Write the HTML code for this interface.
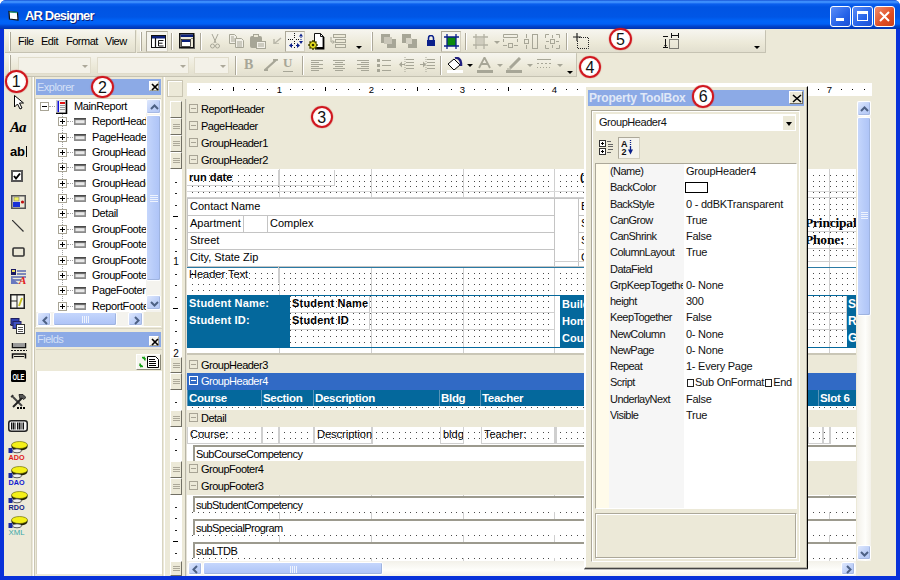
<!DOCTYPE html>
<html><head><meta charset="utf-8">
<style>
*{margin:0;padding:0;box-sizing:border-box}
html,body{width:900px;height:580px;overflow:hidden;background:#fff}
body{font-family:"Liberation Sans",sans-serif;font-size:11px;color:#000;position:relative}
.a{position:absolute}
#win{position:absolute;left:0;top:0;width:900px;height:580px;background:#0831d9;border-radius:6px 6px 0 0;overflow:hidden}
#title{position:absolute;left:0;top:0;width:900px;height:29px;background:linear-gradient(#0a3fc8 0px,#3d8ffc 1px,#3a8bfb 2.5px,#0b60ee 4px,#0054e3 7px,#0056e6 17px,#0064f8 21px,#0060f5 24px,#0046d0 26px,#0034b0 29px)}
#ttext{position:absolute;left:25px;top:8px;color:#fff;font-weight:bold;font-size:13px;line-height:16px;letter-spacing:-0.85px;text-shadow:1px 1px 0 #0a1e7a}
.tb{position:absolute;top:6px;width:21px;height:21px;border:1px solid #fff;border-radius:3px;background:linear-gradient(135deg,#5b8df7,#2562e8 60%,#1d50d4)}
#client{position:absolute;left:4px;top:29px;width:892px;height:547px;background:#ece9d8}
.band{position:absolute;background:#ece9d8}
.tbar{position:absolute;background:linear-gradient(#f6f5ef,#ece9d8 60%,#e2dfcf);border-bottom:1px solid #c5c2b2;border-right:1px solid #c5c2b2;border-radius:0 1px 1px 0}
.grip{position:absolute;width:2px;border-left:1px solid #fff;border-right:1px solid #aca899}
.sep{position:absolute;width:2px;border-left:1px solid #aca899;border-right:1px solid #fff}
.mi{position:absolute;top:35px;font-size:11px}
.combo{position:absolute;background:#f3f1e8;border:1px solid #e0dccb}
.combo:after{content:"";position:absolute;right:2px;top:7px;border-left:3.5px solid transparent;border-right:3.5px solid transparent;border-top:3.5px solid #aca899}
.cap{position:absolute;background:#8caae6;color:#d4e0f6;font-size:11px;padding-left:1px;line-height:16px;letter-spacing:-0.5px}
.xbtn{position:absolute;width:10px;height:10px;background:#f6f5f0;border:1px solid #fff;border-right-color:#a0a090;border-bottom-color:#a0a090}
.circ{position:absolute;width:22.6px;height:22.6px;border-radius:50%;border:2.3px solid #d0161e;background:radial-gradient(circle at 50% 50%,#fff 55%,#fbeaea 80%,#f0c8c8 100%);box-shadow:0 0 0.8px 0.3px rgba(200,30,30,.5);font-size:16px;line-height:19px;text-align:center;color:#111}
.tree{position:absolute;font-size:11px;white-space:nowrap;letter-spacing:-0.4px}
.sh{position:absolute;left:0;height:17px;background:#ece9d8;font-size:11px;line-height:17px;white-space:nowrap}
.box9{position:absolute;width:9px;height:9px;border:1px solid #a8a495;background:#fff}

.mt{font-size:11px;letter-spacing:-0.5px;line-height:11px}
.press{position:absolute;background:#f5f4ee;border:1px solid #d4d0c0;border-top-color:#aca899;border-left-color:#aca899}
.dd{position:absolute;width:0;height:0;border-left:3px solid transparent;border-right:3px solid transparent;border-top:3px solid #000}
.dd.g{border-top-color:#a7a697}

.sbtn{position:absolute;background:linear-gradient(135deg,#dfe8fd,#c1d2f8 50%,#b4c8f6);border:1px solid #fff;border-radius:2px;box-shadow:inset -1px -1px 0 #a6b9e4}
.sthumb{position:absolute;background:linear-gradient(90deg,#c5d6fc,#b8ccf9 50%,#adc3f7);border:1px solid #fff;border-radius:2px;box-shadow:inset -1px -1px 0 #9fb4e0}
.sthumb.h{background:linear-gradient(#c5d6fc,#b8ccf9 50%,#adc3f7)}

.sh{position:absolute;left:0;background:#ece9d8;color:#000;white-space:nowrap}
.sh.sel{background:#316ac5;color:#fff}
.dots{background-image:radial-gradient(circle at 0.5px 0.5px,#000 0.6px,transparent 0.9px);background-size:5.725px 5.725px}
.hdl{position:absolute;left:170px;width:12px;background:#ece9d8;border:1px solid #fff;border-right-color:#716f64;border-bottom-color:#716f64}

.fld{position:absolute;padding-left:2px;line-height:14px;white-space:nowrap;overflow:hidden;letter-spacing:0px}
.fld.w{background:#fff;border:1px solid #c4c4c4;line-height:14px;padding-left:2px}
.teal{position:absolute;background:#04689c;padding:0 2px;white-space:nowrap;overflow:hidden}
.tealf{position:absolute;background:#04689c;color:#fff;border-left:1px solid #5a94b8;padding-left:1px;line-height:16px;white-space:nowrap;overflow:hidden}
.sub{position:absolute;background:#fff;border-top:2px solid #9c9a8e;border-left:2px solid #9c9a8e;padding-left:1px;line-height:14px;white-space:nowrap;letter-spacing:-0.55px}

.ptx{font-size:11px;line-height:13px;white-space:nowrap;letter-spacing:-0.55px;color:#111}
.pt{font-weight:bold;font-size:12px;color:#e0e8f7;letter-spacing:-0.2px;padding-left:1px}
.xbtn2{position:absolute;width:14px;height:13px;background:#ece9d8;border:1px solid #fff;border-right-color:#716f64;border-bottom-color:#716f64}
.vrd{left:170px;width:12px;text-align:center;font-size:10px;line-height:10px}
</style></head><body>
<svg width="0" height="0" style="position:absolute"><defs><pattern id="dp" x="0" y="0" width="23" height="23" patternUnits="userSpaceOnUse"><rect x="0" y="0" width="1" height="1" fill="#4a4a4a"/><rect x="0" y="6" width="1" height="1" fill="#4a4a4a"/><rect x="0" y="11" width="1" height="1" fill="#4a4a4a"/><rect x="0" y="17" width="1" height="1" fill="#4a4a4a"/><rect x="6" y="0" width="1" height="1" fill="#4a4a4a"/><rect x="6" y="6" width="1" height="1" fill="#4a4a4a"/><rect x="6" y="11" width="1" height="1" fill="#4a4a4a"/><rect x="6" y="17" width="1" height="1" fill="#4a4a4a"/><rect x="11" y="0" width="1" height="1" fill="#4a4a4a"/><rect x="11" y="6" width="1" height="1" fill="#4a4a4a"/><rect x="11" y="11" width="1" height="1" fill="#4a4a4a"/><rect x="11" y="17" width="1" height="1" fill="#4a4a4a"/><rect x="17" y="0" width="1" height="1" fill="#4a4a4a"/><rect x="17" y="6" width="1" height="1" fill="#4a4a4a"/><rect x="17" y="11" width="1" height="1" fill="#4a4a4a"/><rect x="17" y="17" width="1" height="1" fill="#4a4a4a"/></pattern></defs></svg>
<div id="win">
 <div id="title">
  <svg class="a" style="left:8px;top:10px" width="11" height="11"><path d="M1 1.5L9.5 2.5 10 10 1.5 9z" fill="#fff" stroke="#111" stroke-width="1.2"/><path d="M1.5 1.8L9.3 2.7" stroke="#2a9a7a" stroke-width="1.3"/></svg>
  <div id="ttext">AR Designer</div>
  <div class="tb" style="left:830px"><div class="a" style="left:5px;top:11px;width:8px;height:3px;background:#fff"></div></div>
  <div class="tb" style="left:852px"><div class="a" style="left:4px;top:4px;width:11px;height:10px;border:1px solid #fff;border-top-width:3px"></div></div>
  <div class="tb" style="left:874px;background:linear-gradient(135deg,#f08d6e,#e04d22 60%,#c8411a)"><svg class="a" style="left:4px;top:4px" width="11" height="11"><path d="M1 1L10 10M10 1L1 10" stroke="#fff" stroke-width="2"/></svg></div>
 </div>
 <div id="client"></div>

 <!-- toolbar row 1 : menu -->
 <div class="tbar" style="left:5px;top:30px;width:131px;height:23px"></div>
 <div class="grip" style="left:9px;top:32px;height:19px"></div>
 <div class="a mt" style="left:18px;top:36px">File</div>
 <div class="a mt" style="left:41px;top:36px">Edit</div>
 <div class="a mt" style="left:66px;top:36px">Format</div>
 <div class="a mt" style="left:105px;top:36px">View</div>
 <!-- toolbar 2 -->
 <div class="tbar" style="left:137px;top:30px;width:629px;height:23px"></div>
 <div class="grip" style="left:140px;top:32px;height:19px"></div>
 <div class="press" style="left:146px;top:31px;width:22px;height:21px"></div>
 <svg class="a" style="left:151px;top:35px" width="15" height="13"><rect x="0.5" y="0.5" width="14" height="12" fill="#fff" stroke="#111"/><rect x="1" y="1" width="13" height="2.5" fill="#0a1f7a"/><path d="M4.5 3v9" stroke="#111" stroke-width="1.2"/><path d="M7.5 5.5h5M7.5 5.5v5.5h5M7.5 8.2h4" stroke="#111" stroke-width="1" fill="none"/></svg>
 <div class="sep" style="left:171px;top:33px;height:17px"></div>
 <svg class="a" style="left:179px;top:33px" width="16" height="16"><rect x="0.75" y="0.75" width="14" height="14" fill="#ece9d8" stroke="#111" stroke-width="1.5"/><rect x="1.5" y="1.5" width="12.5" height="2.5" fill="#0a1f7a"/><rect x="2.5" y="6.5" width="9" height="7" fill="#fff" stroke="#222" stroke-width="0.8"/><rect x="3" y="7" width="8" height="2" fill="#0a1f7a"/><rect x="12.5" y="5" width="1" height="1" fill="#333"/><path d="M15.5 2v14H2" stroke="#555" stroke-width="0.8" fill="none"/></svg>
 <div class="sep" style="left:200px;top:33px;height:17px"></div>
 <svg class="a" style="left:210px;top:34px" width="10" height="15"><path d="M2 0L6 9M8 0L4 9" stroke="#a7a697" fill="none"/><circle cx="2.5" cy="12" r="2" stroke="#a7a697" fill="none"/><circle cx="7.5" cy="12" r="2" stroke="#a7a697" fill="none"/></svg>
 <svg class="a" style="left:229px;top:34px" width="15" height="14"><path d="M0.5 0.5h5l2 2v7h-7z" fill="#f2f0e8" stroke="#a7a697"/><path d="M6.5 4.5h6l2 2v7h-8z" fill="#f2f0e8" stroke="#a7a697"/><path d="M2 3h3M2 5h4M2 7h4M8 8h5M8 10h5M8 12h5" stroke="#a7a697"/></svg>
 <svg class="a" style="left:250px;top:34px" width="16" height="15"><rect x="0" y="2" width="12" height="12" rx="2" fill="#a7a697"/><rect x="3.5" y="0.5" width="5" height="3" fill="#ece9d8" stroke="#a7a697"/><rect x="6.5" y="7.5" width="9" height="7" fill="#f2f0e8" stroke="#a7a697"/><path d="M8 10h6M8 12h6" stroke="#a7a697"/></svg>
 <svg class="a" style="left:273px;top:37px" width="9" height="7"><path d="M8 1L2 6M1 2v5h5" stroke="#b8b6a8" stroke-width="1.5" fill="none"/></svg>
 <div class="press" style="left:285px;top:31px;width:20px;height:21px"></div>
 <svg class="a" style="left:288px;top:33px" width="16" height="16"><path d="M0 6.5h1M2 6.5h1M4 6.5h1M8 6.5h1M10 6.5h1" stroke="#111"/><path d="M6.5 0v1M6.5 2v1M6.5 4v1M6.5 8v1M6.5 10v1M6.5 14v1" stroke="#111"/><path d="M11 3.5l2-3 2 3z M11 8l2 3 2-3z" fill="#0a1f8a"/><path d="M13 4v1M13 6v1" stroke="#0a1f8a"/><path d="M1 12.5l3-2.5v5z M12 12.5l-3-2.5v5z" fill="#0a1f8a"/><path d="M4 12.5h1M8 12.5h1" stroke="#0a1f8a"/></svg>
 <svg class="a" style="left:308px;top:33px" width="18" height="17"><path d="M6.5 0.5h6l3 3v11h-9z" fill="#fff" stroke="#111"/><path d="M15.5 4v11.5H7" stroke="#000" stroke-width="1.8" fill="none"/><path d="M12.5 0.5v3h3" stroke="#111" fill="none"/><g transform="translate(5 12)"><circle r="3.6" fill="#e8e020" stroke="#404000" stroke-width="0.9"/><path d="M0-5v2M0 3v2M-5 0h2M3 0h2M-3.5-3.5l1.4 1.4M2.1 2.1l1.4 1.4M-3.5 3.5l1.4-1.4M2.1-2.1l1.4-1.4" stroke="#505000" stroke-width="1.6"/><circle r="1.3" fill="#303000"/></g></svg>
 <svg class="a" style="left:330px;top:34px" width="16" height="15"><rect x="3.5" y="0.5" width="12" height="3" fill="#ece9d8" stroke="#a7a697"/><rect x="5.5" y="5.5" width="10" height="3" fill="#ece9d8" stroke="#a7a697"/><rect x="5.5" y="10.5" width="10" height="3" fill="#ece9d8" stroke="#a7a697"/><path d="M1 3v5h3M2.5 6.5l2 1.5-2 1.5" stroke="#a7a697" fill="none"/></svg>
 <div class="dd" style="left:356px;top:46px"></div>
 <!-- toolbar 3 -->
 <div class="grip" style="left:371px;top:32px;height:19px"></div>
 <svg class="a" style="left:381px;top:34px" width="15" height="14"><rect x="0" y="0" width="9" height="9" fill="#a7a697"/><rect x="6" y="5" width="9" height="9" fill="#a7a697"/><rect x="3" y="3" width="8" height="7" fill="#c9c6b8"/></svg>
 <svg class="a" style="left:402px;top:34px" width="15" height="14"><rect x="0" y="0" width="9" height="9" fill="#a7a697"/><rect x="6" y="5" width="9" height="9" fill="#a7a697"/><rect x="4" y="4" width="6" height="6" fill="#d6d3c5"/></svg>
 <svg class="a" style="left:427px;top:35px" width="8" height="11"><path d="M1.5 5V3a2.5 2.5 0 0 1 5 0v2" stroke="#0a1f8a" stroke-width="1.5" fill="none"/><rect x="0" y="5" width="8" height="6" fill="#0a1f8a"/></svg>
 <div class="press" style="left:441px;top:31px;width:20px;height:21px"></div>
 <svg class="a" style="left:444px;top:34px" width="15" height="15"><rect x="3" y="3" width="9" height="9" fill="#0c8a0c"/><path d="M3 0v15M12 0v15M0 3h15M0 12h15" stroke="#0a1f8a" stroke-width="1.3"/></svg>
 <div class="sep" style="left:465px;top:33px;height:17px"></div>
 <svg class="a" style="left:473px;top:34px" width="15" height="15"><path d="M3 0v15M11 0v15M0 3h15M0 11h15" stroke="#b3b1a3" stroke-width="1.3"/><rect x="4" y="4" width="6" height="6" fill="#d0cdbf"/></svg>
 <div class="dd g" style="left:494px;top:41px"></div>
 <svg class="a" style="left:503px;top:34px" width="15" height="15"><path d="M0.5 0.5h14v3h-14zM0.5 5v3M14.5 5v3" stroke="#a7a697" fill="none"/><rect x="5.5" y="9.5" width="4" height="4" fill="none" stroke="#a7a697"/><path d="M0 11.5h4M11 11.5h4" stroke="#a7a697"/></svg>
 <svg class="a" style="left:524px;top:34px" width="14" height="15"><rect x="8.5" y="0.5" width="5" height="14" fill="none" stroke="#a7a697"/><rect x="0.5" y="5.5" width="4" height="4" fill="none" stroke="#a7a697"/><path d="M2.5 0v4M2.5 11v4" stroke="#a7a697"/></svg>
 <svg class="a" style="left:545px;top:34px" width="15" height="15"><path d="M0.5 4V0.5H4M11 0.5h3.5V4M14.5 11v3.5H11M4 14.5H0.5V11" stroke="#a7a697" fill="none"/><rect x="5.5" y="5.5" width="4" height="4" fill="none" stroke="#a7a697"/><path d="M7.5 1v3M7.5 11v3M1 7.5h3M11 7.5h3" stroke="#a7a697"/></svg>
 <div class="sep" style="left:566px;top:33px;height:17px"></div>
 <svg class="a" style="left:573px;top:33px" width="16" height="16"><path d="M4 0v8M0 4h8" stroke="#222" stroke-width="1.2"/><path d="M6 4.5h9.5v11h-11V7" stroke="#222" stroke-dasharray="1 1" fill="none"/></svg>
 <svg class="a" style="left:663px;top:33px" width="16" height="16"><path d="M8.5 0v5M15.5 0v5M8.5 2.5h7" stroke="#111"/><path d="M0 3.5h5M2.5 6v9M0 14.5h5" stroke="#111"/><path d="M1 12l1.5 2 1.5-2z" fill="#111"/><rect x="6.5" y="6.5" width="9" height="9" fill="none" stroke="#111" stroke-dasharray="1 1"/></svg>
 <div class="dd" style="left:754px;top:46px"></div>
 <!-- toolbar row 2 -->
 <div class="tbar" style="left:5px;top:53px;width:572px;height:24px"></div>
 <div class="grip" style="left:9px;top:55px;height:20px"></div>
 <div class="combo" style="left:18px;top:57px;width:73px;height:17px"></div>
 <div class="combo" style="left:97px;top:57px;width:92px;height:17px"></div>
 <div class="combo" style="left:194px;top:57px;width:35px;height:17px"></div>
 <div class="sep" style="left:235px;top:56px;height:19px"></div>
 <div class="a" style="left:244px;top:57px;font-family:'Liberation Serif',serif;font-weight:bold;font-size:14px;color:#a7a697">B</div>
 <svg class="a" style="left:264px;top:59px" width="14" height="12"><path d="M1 11L12 1M0 11.5h4M9 0.5h5" stroke="#a7a697" stroke-width="2.3"/></svg>
 <div class="a" style="left:283px;top:56px;font-family:'Liberation Serif',serif;font-weight:bold;font-size:13px;color:#a7a697;line-height:14px">U</div>
 <div class="a" style="left:283px;top:71px;width:10px;height:1px;background:#a7a697"></div>
 <div class="sep" style="left:302px;top:56px;height:19px"></div>
 <svg class="a" style="left:311px;top:60px" width="12" height="12"><path d="M0 0.5h12M0 2.5h8M0 4.5h12M0 6.5h8M0 8.5h12M0 10.5h8" stroke="#a7a697"/></svg>
 <svg class="a" style="left:333px;top:60px" width="12" height="12"><path d="M0 0.5h12M2 2.5h8M0 4.5h12M2 6.5h8M0 8.5h12M2 10.5h8" stroke="#a7a697"/></svg>
 <svg class="a" style="left:357px;top:60px" width="12" height="12"><path d="M0 0.5h12M4 2.5h8M0 4.5h12M4 6.5h8M0 8.5h12M4 10.5h8" stroke="#a7a697"/></svg>
 <svg class="a" style="left:377px;top:59px" width="14" height="13"><rect x="0" y="0" width="3" height="3" fill="#a7a697"/><rect x="0" y="5" width="3" height="3" fill="#a7a697"/><rect x="0" y="10" width="3" height="3" fill="#a7a697"/><path d="M5 1.5h9M5 6.5h9M5 11.5h9" stroke="#a7a697"/></svg>
 <svg class="a" style="left:399px;top:57px" width="15" height="16"><path d="M6 0v16" stroke="#a7a697" stroke-dasharray="1 1"/><path d="M7 2.5h8M7 5.5h8M7 8.5h8M7 11.5h8M2 7.5h4" stroke="#a7a697"/><path d="M0 7.5l3-3v6z" fill="#a7a697"/></svg>
 <svg class="a" style="left:420px;top:57px" width="15" height="16"><path d="M6 0v16" stroke="#a7a697" stroke-dasharray="1 1"/><path d="M7 2.5h8M7 5.5h8M7 8.5h8M7 11.5h8M0 7.5h3" stroke="#a7a697"/><path d="M6 7.5l-3-3v6z" fill="#a7a697"/></svg>
 <div class="sep" style="left:440px;top:56px;height:19px"></div>
 <svg class="a" style="left:447px;top:57px" width="16" height="16"><path d="M1 7l6-5 6 6-6 5z" fill="#fff" stroke="#000"/><path d="M8 1c3-1 6 2 6 5v3" stroke="#222080" stroke-width="2.5" fill="none"/><rect x="0" y="13" width="16" height="3" fill="#fff"/></svg>
 <div class="dd" style="left:467px;top:64px"></div>
 <svg class="a" style="left:477px;top:57px" width="16" height="16"><path d="M2 11L7.5 0.5 13 11M4.5 7h6" stroke="#a7a697" stroke-width="1.8" fill="none"/><rect x="0" y="13" width="16" height="3" fill="#a7a697"/></svg>
 <div class="dd g" style="left:497px;top:64px"></div>
 <svg class="a" style="left:506px;top:57px" width="16" height="16"><path d="M4 11L14 1" stroke="#a7a697" stroke-width="3"/><path d="M1 12h4" stroke="#a7a697"/><rect x="0" y="13" width="16" height="3" fill="#a7a697"/></svg>
 <div class="dd g" style="left:527px;top:64px"></div>
 <svg class="a" style="left:537px;top:59px" width="14" height="12"><path d="M0 0.5h14M0 4.5h2M4 4.5h2M8 4.5h2M12 4.5h2M0 8.5h1M3 8.5h1M6 8.5h1M9 8.5h1M12 8.5h1" stroke="#a7a697"/></svg>
 <div class="dd g" style="left:557px;top:64px"></div>
 <div class="dd" style="left:567px;top:71px"></div>


 <!-- left toolbox -->
 <div class="a" style="left:31px;top:77px;width:1px;height:499px;background:#d8d4c2"></div>
 <div class="a" style="left:33px;top:77px;width:1px;height:499px;background:#fff"></div>
 <div class="a" style="left:34px;top:77px;width:1px;height:499px;background:#c9c5b3"></div>
 <svg class="a" style="left:14px;top:95px" width="10" height="15"><path d="M0.5 0.5v11.5l3-3 2.5 5 2-1-2.5-5h4z" fill="#fff" stroke="#000"/></svg>
 <div class="a" style="left:10px;top:120px;font-family:'Liberation Serif',serif;font-style:italic;font-weight:bold;font-size:15px;line-height:15px;letter-spacing:-1px">Aa</div>
 <div class="a" style="left:10px;top:145px;font-weight:bold;font-size:13px;line-height:13px;letter-spacing:-0.3px">ab</div>
 <div class="a" style="left:26px;top:146px;width:1px;height:11px;background:#000"></div>
 <svg class="a" style="left:11px;top:170px" width="12" height="12"><rect x="1" y="1" width="10" height="10" fill="#fff" stroke="#555" stroke-width="2"/><path d="M3 6l2 2.5 4-5" stroke="#000" stroke-width="2" fill="none"/></svg>
 <svg class="a" style="left:11px;top:195px" width="15" height="14"><rect x="0.75" y="0.75" width="13.5" height="12.5" fill="#ece9d8" stroke="#555" stroke-width="1.5"/><rect x="3" y="2" width="5" height="4" fill="#f0f060" stroke="#777" stroke-width="0.6"/><rect x="2" y="7" width="7" height="5" fill="#1830d8"/><circle cx="11.5" cy="7" r="1.6" fill="#c01010"/></svg>
 <svg class="a" style="left:12px;top:220px" width="12" height="12"><path d="M0 0L11.5 11.5" stroke="#333" stroke-width="1.2"/></svg>
 <svg class="a" style="left:12px;top:247px" width="13" height="10"><rect x="1" y="1" width="11" height="8" rx="1" fill="none" stroke="#333" stroke-width="1.6"/></svg>
 <svg class="a" style="left:11px;top:269px" width="16" height="15"><rect x="0" y="0" width="5" height="6" fill="#1a1a60"/><rect x="1" y="1" width="3" height="2" fill="#f0e060"/><path d="M6 2h9M6 5h9M0 8h15M0 11h10" stroke="#5868b0" stroke-width="1.5"/><path d="M0 8l8 7H0z" fill="#6878c0"/><text x="8" y="15" font-family="Liberation Serif" font-style="italic" font-weight="bold" font-size="11" fill="#e02020">A</text></svg>
 <svg class="a" style="left:10px;top:294px" width="15" height="15"><rect x="0.75" y="0.75" width="13.5" height="13.5" fill="#f8f8f0" stroke="#222" stroke-width="1.5"/><path d="M7 1v13M1 7h6" stroke="#222"/><path d="M9 12l3-8" stroke="#c8c020" stroke-width="2"/></svg>
 <svg class="a" style="left:10px;top:318px" width="15" height="16"><rect x="1" y="0.5" width="8" height="7" fill="#3040b0" stroke="#202060"/><rect x="3" y="3.5" width="8" height="7" fill="#4050c0" stroke="#202060"/><rect x="6.5" y="6.5" width="8" height="9" fill="#fff" stroke="#333"/><path d="M8 9.5h5M8 11.5h5M8 13.5h5" stroke="#555"/><path d="M0 6l2 2" stroke="#333"/></svg>
 <svg class="a" style="left:11px;top:343px" width="16" height="16"><path d="M1.5 0v4.5h13V0" fill="#888" stroke="#111" stroke-width="1.5"/><rect x="2" y="0" width="12" height="4" fill="#999"/><path d="M0 7.5h16" stroke="#111" stroke-dasharray="2 1" stroke-width="1.2"/><path d="M1.5 15.5v-4.5h13v4.5" fill="none" stroke="#111" stroke-width="1.5"/><path d="M3 13.5h10" stroke="#111"/></svg>
 <svg class="a" style="left:11px;top:370px" width="15" height="12"><rect x="0" y="0" width="15" height="12" rx="1.5" fill="#000"/><text x="1.5" y="10" font-family="Liberation Sans" font-weight="bold" font-size="9.5" fill="#fff" textLength="12" lengthAdjust="spacingAndGlyphs">OLE</text></svg>
 <svg class="a" style="left:10px;top:394px" width="16" height="16"><path d="M3 3l9 9" stroke="#444" stroke-width="2"/><path d="M12.5 3.5L3 13" stroke="#222" stroke-width="2"/><path d="M9 0.5l4 0 3 3-2.5 2-1.5-1.5-2 1z" fill="#555" stroke="#111" stroke-width="0.8"/><path d="M0.5 2.5l2-2 1.5 1.5-2 2z" fill="#333"/><rect x="7" y="13" width="2" height="2" fill="#000"/><rect x="10" y="13" width="2" height="2" fill="#000"/><rect x="13" y="13" width="2" height="2" fill="#000"/></svg>
 <svg class="a" style="left:8px;top:420px" width="20" height="12"><rect x="0.75" y="0.75" width="18.5" height="10.5" rx="2.5" fill="#f4f4f4" stroke="#222" stroke-width="1.5"/><path d="M3.5 2.5v7M5.5 2.5v7M7 2.5v7M9.5 2.5v7M11.5 2.5v7M13 2.5v7M15.5 2.5v7" stroke="#111" stroke-width="1"/><path d="M4.5 2.5v7M10.5 2.5v7M14.5 2.5v7" stroke="#777" stroke-width="0.8"/></svg>
 <svg class="a" style="left:8px;top:441px" width="21" height="21"><path d="M3.5 4.5a8 3.5 0 0 1 16 0v1.5a8 3.5 0 0 1-16 0z" fill="#202000"/><ellipse cx="11.5" cy="4" rx="8" ry="3.5" fill="#f4f018" stroke="#606000" stroke-width="0.6"/><ellipse cx="9" cy="9.8" rx="4.5" ry="2" fill="#f0f0f0" stroke="#333" stroke-width="0.8"/><rect x="0.5" y="7" width="4" height="5" fill="#1828a0"/><text x="0.5" y="19" font-family="Liberation Sans" font-weight="bold" font-size="7" fill="#e01818" textLength="16" lengthAdjust="spacingAndGlyphs">ADO</text></svg>
 <svg class="a" style="left:8px;top:466px" width="21" height="21"><path d="M3.5 4.5a8 3.5 0 0 1 16 0v1.5a8 3.5 0 0 1-16 0z" fill="#202000"/><ellipse cx="11.5" cy="4" rx="8" ry="3.5" fill="#f4f018" stroke="#606000" stroke-width="0.6"/><ellipse cx="9" cy="9.8" rx="4.5" ry="2" fill="#f0f0f0" stroke="#333" stroke-width="0.8"/><rect x="0.5" y="7" width="4" height="5" fill="#1828a0"/><text x="0.5" y="19" font-family="Liberation Sans" font-weight="bold" font-size="7" fill="#1018d0" textLength="16" lengthAdjust="spacingAndGlyphs">DAO</text></svg>
 <svg class="a" style="left:8px;top:491px" width="21" height="21"><path d="M3.5 4.5a8 3.5 0 0 1 16 0v1.5a8 3.5 0 0 1-16 0z" fill="#202000"/><ellipse cx="11.5" cy="4" rx="8" ry="3.5" fill="#f4f018" stroke="#606000" stroke-width="0.6"/><ellipse cx="9" cy="9.8" rx="4.5" ry="2" fill="#f0f0f0" stroke="#333" stroke-width="0.8"/><rect x="0.5" y="7" width="4" height="5" fill="#1828a0"/><text x="0.5" y="19" font-family="Liberation Sans" font-weight="bold" font-size="7" fill="#101880" textLength="16" lengthAdjust="spacingAndGlyphs">RDO</text></svg>
 <svg class="a" style="left:8px;top:516px" width="21" height="21"><path d="M3.5 4.5a8 3.5 0 0 1 16 0v1.5a8 3.5 0 0 1-16 0z" fill="#202000"/><ellipse cx="11.5" cy="4" rx="8" ry="3.5" fill="#f4f018" stroke="#606000" stroke-width="0.6"/><ellipse cx="9" cy="9.8" rx="4.5" ry="2" fill="#f0f0f0" stroke="#333" stroke-width="0.8"/><rect x="0.5" y="7" width="4" height="5" fill="#1828a0"/><text x="0.5" y="19" font-family="Liberation Sans" font-weight="normal" font-size="7" fill="#38a8a8" textLength="16" lengthAdjust="spacingAndGlyphs">XML</text></svg>

 <!-- explorer panel -->
 <div class="a" style="left:35px;top:77px;width:128px;height:252px;border-right:1px solid #d8d4c2;border-bottom:1px solid #d8d4c2"></div>
 <div class="cap" style="left:36px;top:79px;width:125px;height:16px">Explorer</div>
 <div class="xbtn" style="left:149px;top:81px"><svg class="a" style="left:1px;top:1px" width="8" height="8"><path d="M1 1l6 6M7 1L1 7" stroke="#000" stroke-width="1.7"/></svg></div>
 <div class="a" style="left:35px;top:98px;width:126px;height:229px;background:#fff;border-left:1px solid #d6d2c0;border-top:1px solid #d6d2c0"></div>
 <div class="a" style="left:49px;top:106px;width:6px;height:0;border-top:1px dotted #a0a0a0"></div>
 <div class="a" style="left:62px;top:112px;width:0;height:193px;border-left:1px dotted #a0a0a0"></div>
 <div class="box9" style="left:40px;top:102px"><div class="a" style="left:1px;top:3px;width:5px;height:1px;background:#000"></div></div>
 <svg class="a" style="left:56px;top:100px" width="12" height="14"><rect x="0" y="0" width="11" height="13" fill="#c8c8c8"/><rect x="1.5" y="1" width="8" height="11" fill="#f4f4f4"/><rect x="1.5" y="1" width="1.5" height="11" fill="#1010e0"/><rect x="4" y="2" width="5" height="2" fill="#e01010"/><path d="M4 5.5h5M4 7.5h5M4 9.5h5" stroke="#999"/><path d="M10.5 0v13.5H0" stroke="#000" stroke-width="1.6" fill="none"/></svg>
 <div class="tree" style="left:74px;top:100px">MainReport</div>
 <div class="box9" style="left:58px;top:117px"><div class="a" style="left:1px;top:3px;width:5px;height:1px;background:#000"></div><div class="a" style="left:3px;top:1px;width:1px;height:5px;background:#000"></div></div>
 <div class="a" style="left:67px;top:121px;width:6px;height:0;border-top:1px dotted #a0a0a0"></div>
 <svg class="a" style="left:74px;top:118px" width="12" height="7"><rect x="0" y="0" width="12" height="7" fill="#8c8c8c"/><rect x="0" y="0" width="12" height="1.5" fill="#4a4a4a"/><rect x="1.5" y="2.2" width="9" height="3" fill="#e8e8e8"/></svg>
 <div class="tree" style="left:92px;top:115px;width:54px;overflow:hidden">ReportHeader</div>
 <div class="box9" style="left:58px;top:133px"><div class="a" style="left:1px;top:3px;width:5px;height:1px;background:#000"></div><div class="a" style="left:3px;top:1px;width:1px;height:5px;background:#000"></div></div>
 <div class="a" style="left:67px;top:137px;width:6px;height:0;border-top:1px dotted #a0a0a0"></div>
 <svg class="a" style="left:74px;top:134px" width="12" height="7"><rect x="0" y="0" width="12" height="7" fill="#8c8c8c"/><rect x="0" y="0" width="12" height="1.5" fill="#4a4a4a"/><rect x="1.5" y="2.2" width="9" height="3" fill="#e8e8e8"/></svg>
 <div class="tree" style="left:92px;top:131px;width:54px;overflow:hidden">PageHeader</div>
 <div class="box9" style="left:58px;top:148px"><div class="a" style="left:1px;top:3px;width:5px;height:1px;background:#000"></div><div class="a" style="left:3px;top:1px;width:1px;height:5px;background:#000"></div></div>
 <div class="a" style="left:67px;top:152px;width:6px;height:0;border-top:1px dotted #a0a0a0"></div>
 <svg class="a" style="left:74px;top:149px" width="12" height="7"><rect x="0" y="0" width="12" height="7" fill="#8c8c8c"/><rect x="0" y="0" width="12" height="1.5" fill="#4a4a4a"/><rect x="1.5" y="2.2" width="9" height="3" fill="#e8e8e8"/></svg>
 <div class="tree" style="left:92px;top:146px;width:54px;overflow:hidden">GroupHeader</div>
 <div class="box9" style="left:58px;top:163px"><div class="a" style="left:1px;top:3px;width:5px;height:1px;background:#000"></div><div class="a" style="left:3px;top:1px;width:1px;height:5px;background:#000"></div></div>
 <div class="a" style="left:67px;top:167px;width:6px;height:0;border-top:1px dotted #a0a0a0"></div>
 <svg class="a" style="left:74px;top:164px" width="12" height="7"><rect x="0" y="0" width="12" height="7" fill="#8c8c8c"/><rect x="0" y="0" width="12" height="1.5" fill="#4a4a4a"/><rect x="1.5" y="2.2" width="9" height="3" fill="#e8e8e8"/></svg>
 <div class="tree" style="left:92px;top:161px;width:54px;overflow:hidden">GroupHeader</div>
 <div class="box9" style="left:58px;top:179px"><div class="a" style="left:1px;top:3px;width:5px;height:1px;background:#000"></div><div class="a" style="left:3px;top:1px;width:1px;height:5px;background:#000"></div></div>
 <div class="a" style="left:67px;top:183px;width:6px;height:0;border-top:1px dotted #a0a0a0"></div>
 <svg class="a" style="left:74px;top:180px" width="12" height="7"><rect x="0" y="0" width="12" height="7" fill="#8c8c8c"/><rect x="0" y="0" width="12" height="1.5" fill="#4a4a4a"/><rect x="1.5" y="2.2" width="9" height="3" fill="#e8e8e8"/></svg>
 <div class="tree" style="left:92px;top:177px;width:54px;overflow:hidden">GroupHeader</div>
 <div class="box9" style="left:58px;top:194px"><div class="a" style="left:1px;top:3px;width:5px;height:1px;background:#000"></div><div class="a" style="left:3px;top:1px;width:1px;height:5px;background:#000"></div></div>
 <div class="a" style="left:67px;top:198px;width:6px;height:0;border-top:1px dotted #a0a0a0"></div>
 <svg class="a" style="left:74px;top:195px" width="12" height="7"><rect x="0" y="0" width="12" height="7" fill="#8c8c8c"/><rect x="0" y="0" width="12" height="1.5" fill="#4a4a4a"/><rect x="1.5" y="2.2" width="9" height="3" fill="#e8e8e8"/></svg>
 <div class="tree" style="left:92px;top:192px;width:54px;overflow:hidden">GroupHeader</div>
 <div class="box9" style="left:58px;top:209px"><div class="a" style="left:1px;top:3px;width:5px;height:1px;background:#000"></div><div class="a" style="left:3px;top:1px;width:1px;height:5px;background:#000"></div></div>
 <div class="a" style="left:67px;top:213px;width:6px;height:0;border-top:1px dotted #a0a0a0"></div>
 <svg class="a" style="left:74px;top:210px" width="12" height="7"><rect x="0" y="0" width="12" height="7" fill="#8c8c8c"/><rect x="0" y="0" width="12" height="1.5" fill="#4a4a4a"/><rect x="1.5" y="2.2" width="9" height="3" fill="#e8e8e8"/></svg>
 <div class="tree" style="left:92px;top:207px;width:54px;overflow:hidden">Detail</div>
 <div class="box9" style="left:58px;top:225px"><div class="a" style="left:1px;top:3px;width:5px;height:1px;background:#000"></div><div class="a" style="left:3px;top:1px;width:1px;height:5px;background:#000"></div></div>
 <div class="a" style="left:67px;top:229px;width:6px;height:0;border-top:1px dotted #a0a0a0"></div>
 <svg class="a" style="left:74px;top:226px" width="12" height="7"><rect x="0" y="0" width="12" height="7" fill="#8c8c8c"/><rect x="0" y="0" width="12" height="1.5" fill="#4a4a4a"/><rect x="1.5" y="2.2" width="9" height="3" fill="#e8e8e8"/></svg>
 <div class="tree" style="left:92px;top:223px;width:54px;overflow:hidden">GroupFooter</div>
 <div class="box9" style="left:58px;top:240px"><div class="a" style="left:1px;top:3px;width:5px;height:1px;background:#000"></div><div class="a" style="left:3px;top:1px;width:1px;height:5px;background:#000"></div></div>
 <div class="a" style="left:67px;top:244px;width:6px;height:0;border-top:1px dotted #a0a0a0"></div>
 <svg class="a" style="left:74px;top:241px" width="12" height="7"><rect x="0" y="0" width="12" height="7" fill="#8c8c8c"/><rect x="0" y="0" width="12" height="1.5" fill="#4a4a4a"/><rect x="1.5" y="2.2" width="9" height="3" fill="#e8e8e8"/></svg>
 <div class="tree" style="left:92px;top:238px;width:54px;overflow:hidden">GroupFooter</div>
 <div class="box9" style="left:58px;top:256px"><div class="a" style="left:1px;top:3px;width:5px;height:1px;background:#000"></div><div class="a" style="left:3px;top:1px;width:1px;height:5px;background:#000"></div></div>
 <div class="a" style="left:67px;top:260px;width:6px;height:0;border-top:1px dotted #a0a0a0"></div>
 <svg class="a" style="left:74px;top:257px" width="12" height="7"><rect x="0" y="0" width="12" height="7" fill="#8c8c8c"/><rect x="0" y="0" width="12" height="1.5" fill="#4a4a4a"/><rect x="1.5" y="2.2" width="9" height="3" fill="#e8e8e8"/></svg>
 <div class="tree" style="left:92px;top:254px;width:54px;overflow:hidden">GroupFooter</div>
 <div class="box9" style="left:58px;top:271px"><div class="a" style="left:1px;top:3px;width:5px;height:1px;background:#000"></div><div class="a" style="left:3px;top:1px;width:1px;height:5px;background:#000"></div></div>
 <div class="a" style="left:67px;top:275px;width:6px;height:0;border-top:1px dotted #a0a0a0"></div>
 <svg class="a" style="left:74px;top:272px" width="12" height="7"><rect x="0" y="0" width="12" height="7" fill="#8c8c8c"/><rect x="0" y="0" width="12" height="1.5" fill="#4a4a4a"/><rect x="1.5" y="2.2" width="9" height="3" fill="#e8e8e8"/></svg>
 <div class="tree" style="left:92px;top:269px;width:54px;overflow:hidden">GroupFooter</div>
 <div class="box9" style="left:58px;top:286px"><div class="a" style="left:1px;top:3px;width:5px;height:1px;background:#000"></div><div class="a" style="left:3px;top:1px;width:1px;height:5px;background:#000"></div></div>
 <div class="a" style="left:67px;top:290px;width:6px;height:0;border-top:1px dotted #a0a0a0"></div>
 <svg class="a" style="left:74px;top:287px" width="12" height="7"><rect x="0" y="0" width="12" height="7" fill="#8c8c8c"/><rect x="0" y="0" width="12" height="1.5" fill="#4a4a4a"/><rect x="1.5" y="2.2" width="9" height="3" fill="#e8e8e8"/></svg>
 <div class="tree" style="left:92px;top:284px;width:54px;overflow:hidden">PageFooter</div>
 <div class="box9" style="left:58px;top:302px"><div class="a" style="left:1px;top:3px;width:5px;height:1px;background:#000"></div><div class="a" style="left:3px;top:1px;width:1px;height:5px;background:#000"></div></div>
 <div class="a" style="left:67px;top:306px;width:6px;height:0;border-top:1px dotted #a0a0a0"></div>
 <svg class="a" style="left:74px;top:303px" width="12" height="7"><rect x="0" y="0" width="12" height="7" fill="#8c8c8c"/><rect x="0" y="0" width="12" height="1.5" fill="#4a4a4a"/><rect x="1.5" y="2.2" width="9" height="3" fill="#e8e8e8"/></svg>
 <div class="tree" style="left:92px;top:300px;width:54px;overflow:hidden">ReportFooter</div>

 <!-- explorer v scrollbar -->
 <div class="a" style="left:146px;top:99px;width:15px;height:213px;background:#f4f3ee"></div>
 <div class="sbtn" style="left:146px;top:99px;width:15px;height:15px"><svg class="a" style="left:3px;top:4px" width="9" height="6"><path d="M1 5l3.5-3.5L8 5" stroke="#4d6185" stroke-width="2" fill="none"/></svg></div>
 <div class="sthumb" style="left:146px;top:115px;width:15px;height:166px"><svg class="a" style="left:3px;top:79px" width="8" height="8"><path d="M0 .5h8M0 2.5h8M0 4.5h8M0 6.5h8" stroke="#eef3fe"/></svg></div>
 <div class="sbtn" style="left:146px;top:295px;width:15px;height:15px"><svg class="a" style="left:3px;top:5px" width="9" height="6"><path d="M1 1l3.5 3.5L8 1" stroke="#4d6185" stroke-width="2" fill="none"/></svg></div>
 <!-- explorer h scrollbar -->
 <div class="a" style="left:36px;top:312px;width:125px;height:14px;background:#f4f3ee"></div>
 <div class="sbtn" style="left:37px;top:312px;width:14px;height:14px"><svg class="a" style="left:4px;top:3px" width="6" height="9"><path d="M5 1L1.5 4.5 5 8" stroke="#4d6185" stroke-width="2" fill="none"/></svg></div>
 <div class="sthumb h" style="left:53px;top:312px;width:64px;height:14px"><svg class="a" style="left:28px;top:3px" width="8" height="7"><path d="M.5 0v7M2.5 0v7M4.5 0v7M6.5 0v7" stroke="#eef3fe"/></svg></div>
 <div class="sbtn" style="left:128px;top:312px;width:15px;height:14px"><svg class="a" style="left:5px;top:3px" width="6" height="9"><path d="M1 1l3.5 3.5L1 8" stroke="#4d6185" stroke-width="2" fill="none"/></svg></div>
 <div class="a" style="left:144px;top:312px;width:17px;height:14px;background:#ece9d8"></div>
 <!-- fields panel -->
 <div class="cap" style="left:36px;top:332px;width:125px;height:15px;line-height:15px">Fields</div>
 <div class="xbtn" style="left:149px;top:336px"><svg class="a" style="left:1px;top:1px" width="8" height="8"><path d="M1 1l6 6M7 1L1 7" stroke="#000" stroke-width="1.7"/></svg></div>
 <div class="a" style="left:36px;top:349px;width:126px;height:22px;background:#ece9d8;border-top:1px solid #d8d4c2"></div>
 <div class="a" style="left:136px;top:354px;width:25px;height:16px;background:#f7f6f0;border:1px solid #fff;border-right-color:#8a8878;border-bottom-color:#8a8878"></div>
 <svg class="a" style="left:139px;top:356px" width="20" height="12"><path d="M3 1.5a3 3 0 0 1 3 3M4 10.5a3 3 0 0 1-3-3" stroke="#18a018" stroke-width="1.6" fill="none"/><path d="M5 0l2 3-3 0z M2 12l-2-3 3 0z" fill="#18a018"/><path d="M8.5 0.5h8l3 3v8h-11z" fill="#fff" stroke="#000"/><path d="M10 3.5h6M10 5.5h7M10 7.5h7M10 9.5h7" stroke="#000"/></svg>
 <div class="a" style="left:36px;top:371px;width:126px;height:203px;background:#fff;border-left:1px solid #d6d2c0"></div>
 <!-- design area -->
 <div class="a" style="left:162px;top:77px;width:1px;height:499px;background:#d8d4c2"></div>
 <div class="a" style="left:164px;top:77px;width:1px;height:499px;background:#fff"></div>
 <div class="a" style="left:167px;top:80px;width:16px;height:17px;background:#ece9d8;border:1px solid #c9c5b3;box-shadow:inset 1px 1px 0 #fff"></div>
 <svg class="a" style="left:187px;top:83px" width="685" height="13"><rect width="685" height="13" fill="#fff"/><rect x="12.0" y="6" width="1" height="1" fill="#000"/><rect x="23.0" y="6" width="1" height="1" fill="#000"/><rect x="35.0" y="6" width="1" height="1" fill="#000"/><path d="M46.5 4v4" stroke="#000"/><rect x="57.0" y="6" width="1" height="1" fill="#000"/><rect x="69.0" y="6" width="1" height="1" fill="#000"/><rect x="80.0" y="6" width="1" height="1" fill="#000"/><text x="92.5" y="9.5" font-family="Liberation Sans" font-size="9.5" text-anchor="middle" fill="#000">1</text><rect x="103.0" y="6" width="1" height="1" fill="#000"/><rect x="115.0" y="6" width="1" height="1" fill="#000"/><rect x="126.0" y="6" width="1" height="1" fill="#000"/><path d="M138.5 4v4" stroke="#000"/><rect x="149.0" y="6" width="1" height="1" fill="#000"/><rect x="161.0" y="6" width="1" height="1" fill="#000"/><rect x="172.0" y="6" width="1" height="1" fill="#000"/><text x="184.5" y="9.5" font-family="Liberation Sans" font-size="9.5" text-anchor="middle" fill="#000">2</text><rect x="195.0" y="6" width="1" height="1" fill="#000"/><rect x="207.0" y="6" width="1" height="1" fill="#000"/><rect x="218.0" y="6" width="1" height="1" fill="#000"/><path d="M230.5 4v4" stroke="#000"/><rect x="241.0" y="6" width="1" height="1" fill="#000"/><rect x="252.0" y="6" width="1" height="1" fill="#000"/><rect x="264.0" y="6" width="1" height="1" fill="#000"/><text x="275.5" y="9.5" font-family="Liberation Sans" font-size="9.5" text-anchor="middle" fill="#000">3</text><rect x="287.0" y="6" width="1" height="1" fill="#000"/><rect x="298.0" y="6" width="1" height="1" fill="#000"/><rect x="310.0" y="6" width="1" height="1" fill="#000"/><path d="M321.5 4v4" stroke="#000"/><rect x="333.0" y="6" width="1" height="1" fill="#000"/><rect x="344.0" y="6" width="1" height="1" fill="#000"/><rect x="356.0" y="6" width="1" height="1" fill="#000"/><text x="367.5" y="9.5" font-family="Liberation Sans" font-size="9.5" text-anchor="middle" fill="#000">4</text><rect x="379.0" y="6" width="1" height="1" fill="#000"/><rect x="390.0" y="6" width="1" height="1" fill="#000"/><rect x="402.0" y="6" width="1" height="1" fill="#000"/><path d="M413.5 4v4" stroke="#000"/><rect x="425.0" y="6" width="1" height="1" fill="#000"/><rect x="436.0" y="6" width="1" height="1" fill="#000"/><rect x="447.0" y="6" width="1" height="1" fill="#000"/><rect x="470.0" y="6" width="1" height="1" fill="#000"/><rect x="482.0" y="6" width="1" height="1" fill="#000"/><rect x="493.0" y="6" width="1" height="1" fill="#000"/><path d="M505.5 4v4" stroke="#000"/><rect x="516.0" y="6" width="1" height="1" fill="#000"/><rect x="528.0" y="6" width="1" height="1" fill="#000"/><rect x="539.0" y="6" width="1" height="1" fill="#000"/><rect x="562.0" y="6" width="1" height="1" fill="#000"/><rect x="574.0" y="6" width="1" height="1" fill="#000"/><rect x="585.0" y="6" width="1" height="1" fill="#000"/><path d="M597.5 4v4" stroke="#000"/><rect x="608.0" y="6" width="1" height="1" fill="#000"/><rect x="620.0" y="6" width="1" height="1" fill="#000"/><rect x="631.0" y="6" width="1" height="1" fill="#000"/><text x="642.5" y="9.5" font-family="Liberation Sans" font-size="9.5" text-anchor="middle" fill="#000">7</text><rect x="654.0" y="6" width="1" height="1" fill="#000"/><rect x="665.0" y="6" width="1" height="1" fill="#000"/><rect x="677.0" y="6" width="1" height="1" fill="#000"/><path d="M688.5 4v4" stroke="#000"/><rect x="700.0" y="6" width="1" height="1" fill="#000"/><rect x="711.0" y="6" width="1" height="1" fill="#000"/><rect x="723.0" y="6" width="1" height="1" fill="#000"/></svg>
 <div class="a" style="left:170px;top:101px;width:12px;height:475px;background:#fff"></div>
 <div class="a" style="left:185px;top:99px;width:1px;height:477px;background:#b8b5a5"></div><div class="a" style="left:186px;top:99px;width:1px;height:477px;background:#e4e1d6"></div>
 <div class="a" style="left:187px;top:101px;width:669px;height:460px;background:#fff;overflow:hidden" id="surf">
  <div class="sh" style="top:0px;width:669px;height:17px;line-height:17px"><div class="a" style="left:2px;top:3px;width:9px;height:9px;border:1px solid #a8a495"><div class="a" style="left:1px;top:3px;width:5px;height:1px;background:#a8a495"></div></div><span class="a" style="left:14px;top:0;letter-spacing:-0.5px">ReportHeader</span></div>
  <div class="sh" style="top:17px;width:669px;height:17px;line-height:17px"><div class="a" style="left:2px;top:3px;width:9px;height:9px;border:1px solid #a8a495"><div class="a" style="left:1px;top:3px;width:5px;height:1px;background:#a8a495"></div></div><span class="a" style="left:14px;top:0;letter-spacing:-0.5px">PageHeader</span></div>
  <div class="sh" style="top:34px;width:669px;height:17px;line-height:17px"><div class="a" style="left:2px;top:3px;width:9px;height:9px;border:1px solid #a8a495"><div class="a" style="left:1px;top:3px;width:5px;height:1px;background:#a8a495"></div></div><span class="a" style="left:14px;top:0;letter-spacing:-0.5px">GroupHeader1</span></div>
  <div class="sh" style="top:51px;width:669px;height:17px;line-height:17px"><div class="a" style="left:2px;top:3px;width:9px;height:9px;border:1px solid #a8a495"><div class="a" style="left:1px;top:3px;width:5px;height:1px;background:#a8a495"></div></div><span class="a" style="left:14px;top:0;letter-spacing:-0.5px">GroupHeader2</span></div>
  <svg class="a" style="left:5px;top:74px" width="664" height="182"><rect width="663" height="182" fill="url(#dp)"/></svg>
  <div class="a" style="left:92px;top:68px;width:1px;height:188px;background:#cfcfcf"></div>
  <div class="a" style="left:184px;top:68px;width:1px;height:188px;background:#cfcfcf"></div>
  <div class="a" style="left:276px;top:68px;width:1px;height:188px;background:#cfcfcf"></div>
  <div class="a" style="left:367px;top:68px;width:1px;height:188px;background:#cfcfcf"></div>
  <div class="a" style="left:459px;top:68px;width:1px;height:188px;background:#cfcfcf"></div>
  <div class="a" style="left:550px;top:68px;width:1px;height:188px;background:#cfcfcf"></div>
  <div class="a" style="left:642px;top:68px;width:1px;height:188px;background:#cfcfcf"></div>
  <div class="fld nb" style="left:0px;top:69px;width:92px;height:16px;border-right:1px solid #cfcfcf;border-bottom:1px solid #cfcfcf"><span style="font-weight:bold">run date</span></div>
  <div class="fld nb" style="left:92px;top:69px;width:56px;height:16px;border-right:1px solid #cfcfcf;border-bottom:1px solid #cfcfcf"></div>
  <div class="a" style="left:0px;top:90px;width:669px;height:1px;background:#d8d8d8"></div>
  <div class="a" style="left:0px;top:96px;width:669px;height:1px;background:#cfcfcf"></div>
  <div class="fld nb" style="left:391px;top:69px;width:12px;height:16px;"><span style="font-weight:bold">(</span></div>
  <div class="a" style="left:0;top:97px;width:367px;height:69px;background:#fff"></div>
  <div class="fld w" style="left:0px;top:97px;width:368px;height:18px;">Contact Name</div>
  <div class="fld w" style="left:0px;top:114px;width:57px;height:18px;">Apartment</div>
  <div class="fld w" style="left:56px;top:114px;width:25px;height:18px;"></div>
  <div class="fld w" style="left:80px;top:114px;width:288px;height:18px;">Complex</div>
  <div class="fld w" style="left:0px;top:131px;width:368px;height:18px;">Street</div>
  <div class="fld w" style="left:0px;top:148px;width:368px;height:18px;">City, State Zip</div>
  <div class="fld w" style="left:367px;top:97px;width:25px;height:69px;"></div>
  <div class="fld w" style="left:391px;top:97px;width:63px;height:18px;">B</div>
  <div class="fld w" style="left:391px;top:114px;width:63px;height:18px;">S</div>
  <div class="fld w" style="left:391px;top:131px;width:63px;height:18px;">S</div>
  <div class="fld w" style="left:391px;top:148px;width:63px;height:18px;">C</div>
  <div class="fld nb" style="left:618px;top:114px;width:51px;height:17px;padding-left:0;border-bottom:1px solid #cfcfcf;line-height:15px"><span style="font-family:'Liberation Serif',serif;font-weight:bold;font-size:13.5px;letter-spacing:-0.2px">Principal</span></div>
  <div class="fld nb" style="left:618px;top:131px;width:51px;height:17px;padding-left:0;border-bottom:1px solid #cfcfcf;line-height:15px"><span style="font-family:'Liberation Serif',serif;font-weight:bold;font-size:13.5px;letter-spacing:-0.2px">Phone:</span></div>
  <div class="a" style="left:367px;top:160px;width:302px;height:1px;background:#cfcfcf"></div>
  <div class="a" style="left:0px;top:166px;width:669px;height:1px;background:#2a7aa4"></div>
  <div class="fld nb" style="left:0px;top:166px;width:92px;height:16px;border-right:1px solid #cfcfcf">Header Text</div>
  <div class="a" style="left:0px;top:194px;width:669px;height:1px;background:#04689c"></div>
  <div class="teal" style="left:0px;top:195px;width:103px;height:52px;"><div style="color:#fff;font-weight:bold;letter-spacing:0.2px;line-height:17px;margin-top:-1px">Student Name:<br>Student ID:</div></div>
  <div class="fld nb" style="left:103px;top:195px;width:80px;height:17px;border-bottom:1px solid #cfcfcf;border-right:1px solid #cfcfcf"><span style="font-weight:bold;letter-spacing:0.2px">Student Name</span></div>
  <div class="fld nb" style="left:103px;top:212px;width:80px;height:17px;border-bottom:1px solid #cfcfcf;border-right:1px solid #cfcfcf"><span style="font-weight:bold;letter-spacing:0.2px">Student ID</span></div>
  <div class="fld nb" style="left:184px;top:195px;width:183px;height:17px;border-bottom:1px solid #cfcfcf"></div>
  <div class="fld nb" style="left:184px;top:212px;width:183px;height:17px;border-bottom:1px solid #cfcfcf"></div>
  <div class="teal" style="left:373px;top:195px;width:40px;height:52px;"><div style="color:#fff;font-weight:bold;line-height:17px">Building<br>Home<br>Course</div></div>
  <div class="fld nb" style="left:621px;top:195px;width:39px;height:17px;border-bottom:1px solid #cfcfcf;border-right:1px solid #cfcfcf"></div>
  <div class="fld nb" style="left:621px;top:212px;width:39px;height:17px;border-bottom:1px solid #cfcfcf;border-right:1px solid #cfcfcf"></div>
  <div class="teal" style="left:660px;top:195px;width:23px;height:52px;padding-left:1px"><div style="color:#fff;font-weight:bold;line-height:17px;font-size:12px">S<br>R<br>G</div></div>
  <div class="a" style="left:0px;top:246px;width:669px;height:1px;background:#04689c"></div>
  <div class="a" style="left:0;top:247px;width:669px;height:9px;background:#fff"></div>
  <div class="a" style="left:92px;top:247px;width:1px;height:9px;background:#cfcfcf"></div>
  <div class="a" style="left:184px;top:247px;width:1px;height:9px;background:#cfcfcf"></div>
  <div class="a" style="left:276px;top:247px;width:1px;height:9px;background:#cfcfcf"></div>
  <div class="a" style="left:367px;top:247px;width:1px;height:9px;background:#cfcfcf"></div>
  <div class="a" style="left:459px;top:247px;width:1px;height:9px;background:#cfcfcf"></div>
  <div class="a" style="left:550px;top:247px;width:1px;height:9px;background:#cfcfcf"></div>
  <div class="a" style="left:642px;top:247px;width:1px;height:9px;background:#cfcfcf"></div>
  <div class="a" style="left:0px;top:252px;width:669px;height:2px;background:#c9c6b6"></div>

  <div class="sh" style="top:254px;width:669px;height:18px;line-height:20px"><div class="a" style="left:2px;top:5px;width:9px;height:9px;border:1px solid #a8a495"><div class="a" style="left:1px;top:3px;width:5px;height:1px;background:#a8a495"></div></div><span class="a" style="left:14px;top:0;letter-spacing:-0.5px">GroupHeader3</span></div>
  <div class="sh sel" style="top:272px;width:669px;height:17px;line-height:17px"><div class="a" style="left:2px;top:3px;width:9px;height:9px;border:1px solid #fff"><div class="a" style="left:1px;top:3px;width:5px;height:1px;background:#fff"></div></div><span class="a" style="left:14px;top:0;letter-spacing:-0.5px">GroupHeader4</span></div>
  <svg class="a" style="left:5px;top:295px" width="664" height="14"><rect width="663" height="14" fill="url(#dp)"/></svg>
  <div class="a" style="left:0;top:289px;width:669px;height:16px;background:#04689c"></div>
  <div class="tealf" style="left:0px;top:289px;width:74px;height:16px;"><span style="font-weight:bold;font-size:11.5px;letter-spacing:-0.3px">Course</span></div>
  <div class="tealf" style="left:74px;top:289px;width:52px;height:16px;"><span style="font-weight:bold;font-size:11.5px;letter-spacing:-0.3px">Section</span></div>
  <div class="tealf" style="left:126px;top:289px;width:126px;height:16px;"><span style="font-weight:bold;font-size:11.5px;letter-spacing:-0.3px">Description</span></div>
  <div class="tealf" style="left:252px;top:289px;width:41px;height:16px;"><span style="font-weight:bold;font-size:11.5px;letter-spacing:-0.3px">Bldg</span></div>
  <div class="tealf" style="left:293px;top:289px;width:120px;height:16px;"><span style="font-weight:bold;font-size:11.5px;letter-spacing:-0.3px">Teacher</span></div>
  <div class="tealf" style="left:631px;top:289px;width:38px;height:16px;"><span style="font-weight:bold;font-size:11.5px;letter-spacing:-0.3px">Slot 6</span></div>

  <div class="sh" style="top:309px;width:669px;height:17px;line-height:17px"><div class="a" style="left:2px;top:3px;width:9px;height:9px;border:1px solid #a8a495"><div class="a" style="left:1px;top:3px;width:5px;height:1px;background:#a8a495"></div></div><span class="a" style="left:14px;top:0;letter-spacing:-0.5px">Detail</span></div>
  <svg class="a" style="left:5px;top:331px" width="664" height="11"><rect width="664" height="11" fill="url(#dp)"/></svg>
  <div class="a" style="left:92px;top:326px;width:1px;height:17px;background:#cfcfcf"></div>
  <div class="a" style="left:184px;top:326px;width:1px;height:17px;background:#cfcfcf"></div>
  <div class="a" style="left:276px;top:326px;width:1px;height:17px;background:#cfcfcf"></div>
  <div class="a" style="left:367px;top:326px;width:1px;height:17px;background:#cfcfcf"></div>
  <div class="a" style="left:459px;top:326px;width:1px;height:17px;background:#cfcfcf"></div>
  <div class="a" style="left:550px;top:326px;width:1px;height:17px;background:#cfcfcf"></div>
  <div class="a" style="left:642px;top:326px;width:1px;height:17px;background:#cfcfcf"></div>
  <div class="fld nb" style="left:0px;top:326px;width:75px;height:17px;border:1px solid #cfcfcf;border-top:none;line-height:15px">Course:</div>
  <div class="fld nb" style="left:75px;top:326px;width:17px;height:17px;border:1px solid #cfcfcf;border-top:none;line-height:15px"></div>
  <div class="fld nb" style="left:92px;top:326px;width:35px;height:17px;border:1px solid #cfcfcf;border-top:none;line-height:15px"></div>
  <div class="fld nb" style="left:127px;top:326px;width:59px;height:17px;border:1px solid #cfcfcf;border-top:none;line-height:15px">Description</div>
  <div class="fld nb" style="left:253px;top:326px;width:24px;height:17px;border:1px solid #cfcfcf;border-top:none;line-height:15px">bldg</div>
  <div class="fld nb" style="left:294px;top:326px;width:75px;height:17px;border:1px solid #cfcfcf;border-top:none;line-height:15px">Teacher:</div>
  <div class="fld nb" style="left:369px;top:326px;width:45px;height:17px;border:1px solid #cfcfcf;border-top:none;line-height:15px"></div>
  <div class="fld nb" style="left:621px;top:326px;width:15px;height:17px;border:1px solid #cfcfcf;border-top:none;line-height:15px"></div>
  <div class="fld nb" style="left:636px;top:326px;width:8px;height:17px;border:1px solid #cfcfcf;border-top:none;line-height:15px"></div>
  <div class="sub" style="left:6px;top:344px;width:677px;height:16px;">SubCourseCompetency</div>

  <div class="sh" style="top:360px;width:669px;height:17px;line-height:17px"><div class="a" style="left:2px;top:3px;width:9px;height:9px;border:1px solid #a8a495"><div class="a" style="left:1px;top:3px;width:5px;height:1px;background:#a8a495"></div></div><span class="a" style="left:14px;top:0;letter-spacing:-0.5px">GroupFooter4</span></div>
  <div class="sh" style="top:377px;width:669px;height:17px;line-height:17px"><div class="a" style="left:2px;top:3px;width:9px;height:9px;border:1px solid #a8a495"><div class="a" style="left:1px;top:3px;width:5px;height:1px;background:#a8a495"></div></div><span class="a" style="left:14px;top:0;letter-spacing:-0.5px">GroupFooter3</span></div>
  <svg class="a" style="left:5px;top:411px" width="664" height="1"><rect width="664" height="1" fill="url(#dp)"/></svg>
  <svg class="a" style="left:5px;top:434px" width="664" height="1"><rect width="664" height="1" fill="url(#dp)"/></svg>
  <svg class="a" style="left:5px;top:457px" width="664" height="1"><rect width="664" height="1" fill="url(#dp)"/></svg>
  <div class="a" style="left:92px;top:394px;width:1px;height:66px;background:#cfcfcf"></div>
  <div class="a" style="left:184px;top:394px;width:1px;height:66px;background:#cfcfcf"></div>
  <div class="a" style="left:276px;top:394px;width:1px;height:66px;background:#cfcfcf"></div>
  <div class="a" style="left:367px;top:394px;width:1px;height:66px;background:#cfcfcf"></div>
  <div class="a" style="left:459px;top:394px;width:1px;height:66px;background:#cfcfcf"></div>
  <div class="a" style="left:550px;top:394px;width:1px;height:66px;background:#cfcfcf"></div>
  <div class="a" style="left:642px;top:394px;width:1px;height:66px;background:#cfcfcf"></div>
  <div class="sub" style="left:6px;top:395px;width:677px;height:16px;">subStudentCompetency</div>
  <div class="sub" style="left:6px;top:418px;width:677px;height:16px;">subSpecialProgram</div>
  <div class="sub" style="left:6px;top:441px;width:677px;height:16px;">subLTDB</div>

 </div>
 <div class="hdl" style="top:101px;height:17px"></div>
 <div class="hdl" style="top:118px;height:17px"><div class="a" style="left:2px;top:5px;width:7px;height:5px;border-top:1px solid #aca899;border-bottom:1px solid #aca899"></div><div class="a" style="left:2px;top:7px;width:7px;height:1px;background:#aca899"></div></div>
 <div class="hdl" style="top:135px;height:17px"><div class="a" style="left:2px;top:5px;width:7px;height:5px;border-top:1px solid #aca899;border-bottom:1px solid #aca899"></div><div class="a" style="left:2px;top:7px;width:7px;height:1px;background:#aca899"></div></div>
 <div class="hdl" style="top:152px;height:17px"><div class="a" style="left:2px;top:5px;width:7px;height:5px;border-top:1px solid #aca899;border-bottom:1px solid #aca899"></div><div class="a" style="left:2px;top:7px;width:7px;height:1px;background:#aca899"></div></div>
 <div class="hdl" style="top:357px;height:16px"><div class="a" style="left:2px;top:5px;width:7px;height:5px;border-top:1px solid #aca899;border-bottom:1px solid #aca899"></div><div class="a" style="left:2px;top:7px;width:7px;height:1px;background:#aca899"></div></div>
 <div class="hdl" style="top:373px;height:17px"><div class="a" style="left:2px;top:5px;width:7px;height:5px;border-top:1px solid #aca899;border-bottom:1px solid #aca899"></div><div class="a" style="left:2px;top:7px;width:7px;height:1px;background:#aca899"></div></div>
 <div class="hdl" style="top:410px;height:17px"><div class="a" style="left:2px;top:5px;width:7px;height:5px;border-top:1px solid #aca899;border-bottom:1px solid #aca899"></div><div class="a" style="left:2px;top:7px;width:7px;height:1px;background:#aca899"></div></div>
 <div class="hdl" style="top:461px;height:17px"><div class="a" style="left:2px;top:5px;width:7px;height:5px;border-top:1px solid #aca899;border-bottom:1px solid #aca899"></div><div class="a" style="left:2px;top:7px;width:7px;height:1px;background:#aca899"></div></div>
 <div class="hdl" style="top:478px;height:17px"><div class="a" style="left:2px;top:5px;width:7px;height:5px;border-top:1px solid #aca899;border-bottom:1px solid #aca899"></div><div class="a" style="left:2px;top:7px;width:7px;height:1px;background:#aca899"></div></div>
 <div class="hdl" style="top:561px;height:15px"><div class="a" style="left:2px;top:4px;width:7px;height:5px;border-top:1px solid #aca899;border-bottom:1px solid #aca899"></div><div class="a" style="left:2px;top:6px;width:7px;height:1px;background:#aca899"></div></div>
 <div class="a" style="left:857px;top:101px;width:14px;height:460px;background:linear-gradient(90deg,#f3f1ea,#fefefb 60%,#f3f1ea)"></div>
 <div class="sbtn" style="left:857px;top:101px;width:14px;height:15px"><svg class="a" style="left:2px;top:4px" width="9" height="6"><path d="M1 5l3.5-3.5L8 5" stroke="#4d6185" stroke-width="2" fill="none"/></svg></div>
 <div class="sthumb" style="left:857px;top:117px;width:14px;height:199px"><svg class="a" style="left:3px;top:94px" width="7" height="8"><path d="M0 .5h7M0 2.5h7M0 4.5h7M0 6.5h7" stroke="#eef3fe"/></svg></div>
 <div class="sbtn" style="left:857px;top:545px;width:14px;height:15px"><svg class="a" style="left:2px;top:5px" width="9" height="6"><path d="M1 1l3.5 3.5L8 1" stroke="#4d6185" stroke-width="2" fill="none"/></svg></div>
 <div class="a" style="left:187px;top:561px;width:669px;height:15px;background:linear-gradient(#f3f1ea,#fefefb 60%,#f3f1ea)"></div>
 <div class="sbtn" style="left:188px;top:562px;width:14px;height:13px"><svg class="a" style="left:3px;top:2px" width="6" height="9"><path d="M5 1L1.5 4.5 5 8" stroke="#4d6185" stroke-width="2" fill="none"/></svg></div>
 <div class="sthumb h" style="left:203px;top:562px;width:180px;height:13px"><svg class="a" style="left:86px;top:3px" width="8" height="7"><path d="M.5 0v7M2.5 0v7M4.5 0v7M6.5 0v7" stroke="#eef3fe"/></svg></div>
 <div class="sbtn" style="left:841px;top:562px;width:14px;height:13px"><svg class="a" style="left:4px;top:2px" width="6" height="9"><path d="M1 1l3.5 3.5L1 8" stroke="#4d6185" stroke-width="2" fill="none"/></svg></div>
 <div class="a" style="left:175px;top:182px;width:2px;height:1px;background:#222"></div>
 <div class="a" style="left:175px;top:193px;width:2px;height:1px;background:#222"></div>
 <div class="a" style="left:175px;top:205px;width:2px;height:1px;background:#222"></div>
 <div class="a" style="left:173px;top:216px;width:5px;height:1px;background:#000"></div>
 <div class="a" style="left:175px;top:228px;width:2px;height:1px;background:#222"></div>
 <div class="a" style="left:175px;top:239px;width:2px;height:1px;background:#222"></div>
 <div class="a" style="left:175px;top:251px;width:2px;height:1px;background:#222"></div>
 <div class="a vrd" style="top:257px">1</div>
 <div class="a" style="left:175px;top:274px;width:2px;height:1px;background:#222"></div>
 <div class="a" style="left:175px;top:285px;width:2px;height:1px;background:#222"></div>
 <div class="a" style="left:175px;top:297px;width:2px;height:1px;background:#222"></div>
 <div class="a" style="left:173px;top:308px;width:5px;height:1px;background:#000"></div>
 <div class="a" style="left:175px;top:320px;width:2px;height:1px;background:#222"></div>
 <div class="a" style="left:175px;top:331px;width:2px;height:1px;background:#222"></div>
 <div class="a" style="left:175px;top:343px;width:2px;height:1px;background:#222"></div>
 <div class="a" style="left:175px;top:402px;width:2px;height:1px;background:#222"></div>
 <div class="a" style="left:175px;top:439px;width:2px;height:1px;background:#222"></div>
 <div class="a" style="left:175px;top:450px;width:2px;height:1px;background:#222"></div>
 <div class="a" style="left:175px;top:507px;width:2px;height:1px;background:#222"></div>
 <div class="a" style="left:175px;top:518px;width:2px;height:1px;background:#222"></div>
 <div class="a" style="left:175px;top:530px;width:2px;height:1px;background:#222"></div>
 <div class="a" style="left:173px;top:541px;width:5px;height:1px;background:#000"></div>
 <div class="a" style="left:175px;top:553px;width:2px;height:1px;background:#222"></div>
 <div class="a vrd" style="top:349px">2</div>
 <!-- property toolbox -->
 <div class="a" style="left:584px;top:86px;width:224px;height:483px;background:#ece9d8;border:1px solid #fff;border-right:1px solid #000;border-bottom:1px solid #444;box-shadow:inset -1px -1px 0 #b8b5a8, 0 1px 0 #bbb"></div>
 <div class="a" style="left:585px;top:87px;width:1px;height:480px;background:#fff"></div>
 <div class="cap pt" style="left:588px;top:90px;width:216px;height:16px">Property ToolBox</div>
 <div class="xbtn2" style="left:789px;top:91px"><svg class="a" style="left:1.5px;top:1.5px" width="10" height="9"><path d="M1 1l8 7M9 1L1 8" stroke="#000" stroke-width="1.6"/></svg></div>
 <div class="a" style="left:591px;top:110px;width:209px;height:452px;border:1px solid #aca899;border-right-color:#fff;border-bottom-color:#fff;box-shadow:inset 1px 1px 0 #fff"></div>
 <div class="a" style="left:596px;top:114px;width:200px;height:17px;background:#fff"></div>
 <div class="a ptx" style="left:599px;top:116px;letter-spacing:-0.45px">GroupHeader4</div>
 <div class="a" style="left:783px;top:116px;width:12px;height:14px;background:#ece9d8"></div>
 <div class="dd" style="left:786px;top:122px;border-width:4px 3px 0 3px"></div>
 <svg class="a" style="left:599px;top:140px" width="15" height="15"><rect x="0.5" y="0.5" width="6" height="6" fill="#fff" stroke="#333"/><path d="M2 3.5h3M3.5 2v3" stroke="#000"/><rect x="0.5" y="8.5" width="6" height="6" fill="#fff" stroke="#333"/><path d="M2 11.5h3M3.5 10v3" stroke="#000"/><path d="M8 1.5h4M8 12.5h4M9 4.5h5M9 6.5h5M9 9.5h5" stroke="#666"/></svg>
 <div class="press" style="left:618px;top:137px;width:22px;height:22px"></div>
 <svg class="a" style="left:621px;top:139px" width="15" height="17"><text x="0" y="8" font-family="Liberation Sans" font-weight="bold" font-size="9" fill="#111">A</text><text x="0.5" y="15.5" font-family="Liberation Sans" font-weight="bold" font-size="9" fill="#111">2</text><path d="M9.5 1v1M9.5 3v1M9.5 5v1M9.5 7v4" stroke="#0a1f8a" stroke-width="1.3"/><path d="M7 10.5l2.5 5 2.5-5z" fill="#0a1f8a"/></svg>
 <div class="a" style="left:595px;top:163px;width:202px;height:346px;background:#fff;border:1px solid #aca899;border-right-color:#fff;border-bottom-color:#fff"></div>
 <div class="a" style="left:596px;top:164px;width:13px;height:344px;background:#fffbea"></div>
 <div class="a" style="left:609px;top:164px;width:75px;height:344px;background:#f6f6f6"></div>
 <div class="a ptx" style="left:610px;top:165.00px;width:73px;overflow:hidden">(Name)</div>
 <div class="a ptx" style="left:686px;top:165.00px;letter-spacing:-0.25px">GroupHeader4</div>
 <div class="a ptx" style="left:610px;top:181.25px;width:73px;overflow:hidden">BackColor</div>
 <div class="a ptx" style="left:610px;top:197.50px;width:73px;overflow:hidden">BackStyle</div>
 <div class="a ptx" style="left:686px;top:197.50px;letter-spacing:-0.25px">0 - ddBKTransparent</div>
 <div class="a ptx" style="left:610px;top:213.75px;width:73px;overflow:hidden">CanGrow</div>
 <div class="a ptx" style="left:686px;top:213.75px;letter-spacing:-0.25px">True</div>
 <div class="a ptx" style="left:610px;top:230.00px;width:73px;overflow:hidden">CanShrink</div>
 <div class="a ptx" style="left:686px;top:230.00px;letter-spacing:-0.25px">False</div>
 <div class="a ptx" style="left:610px;top:246.25px;width:73px;overflow:hidden">ColumnLayout</div>
 <div class="a ptx" style="left:686px;top:246.25px;letter-spacing:-0.25px">True</div>
 <div class="a ptx" style="left:610px;top:262.50px;width:73px;overflow:hidden">DataField</div>
 <div class="a ptx" style="left:610px;top:278.75px;width:73px;overflow:hidden">GrpKeepTogether</div>
 <div class="a ptx" style="left:686px;top:278.75px;letter-spacing:-0.25px">0- None</div>
 <div class="a ptx" style="left:610px;top:295.00px;width:73px;overflow:hidden">height</div>
 <div class="a ptx" style="left:686px;top:295.00px;letter-spacing:-0.25px">300</div>
 <div class="a ptx" style="left:610px;top:311.25px;width:73px;overflow:hidden">KeepTogether</div>
 <div class="a ptx" style="left:686px;top:311.25px;letter-spacing:-0.25px">False</div>
 <div class="a ptx" style="left:610px;top:327.50px;width:73px;overflow:hidden">NewColumn</div>
 <div class="a ptx" style="left:686px;top:327.50px;letter-spacing:-0.25px">0- None</div>
 <div class="a ptx" style="left:610px;top:343.75px;width:73px;overflow:hidden">NewPage</div>
 <div class="a ptx" style="left:686px;top:343.75px;letter-spacing:-0.25px">0- None</div>
 <div class="a ptx" style="left:610px;top:360.00px;width:73px;overflow:hidden">Repeat</div>
 <div class="a ptx" style="left:686px;top:360.00px;letter-spacing:-0.25px">1- Every Page</div>
 <div class="a ptx" style="left:610px;top:376.25px;width:73px;overflow:hidden">Script</div>
 <div class="a ptx" style="left:686px;top:376.25px;letter-spacing:-0.25px"><span style="display:inline-block;width:7px;height:8px;border:1px solid #222;vertical-align:-1px;margin:0 1px 0 1px"></span>Sub OnFormat<span style="display:inline-block;width:7px;height:8px;border:1px solid #222;vertical-align:-1px;margin:0 1px 0 1px"></span>End</div>
 <div class="a ptx" style="left:610px;top:392.50px;width:73px;overflow:hidden">UnderlayNext</div>
 <div class="a ptx" style="left:686px;top:392.50px;letter-spacing:-0.25px">False</div>
 <div class="a ptx" style="left:610px;top:408.75px;width:73px;overflow:hidden">Visible</div>
 <div class="a ptx" style="left:686px;top:408.75px;letter-spacing:-0.25px">True</div>
 <div class="a" style="left:685px;top:182px;width:23px;height:11px;border:1px solid #000;background:#fff"></div>
 <div class="a" style="left:595px;top:513px;width:202px;height:46px;border:1px solid #aca899;border-right-color:#fff;border-bottom-color:#fff;box-shadow:inset -1px -1px 0 #aca899, inset 1px 1px 0 #fff"></div>
 <div class="circ" style="left:5.0px;top:70.1px">1</div>
 <div class="circ" style="left:91.1px;top:75.7px">2</div>
 <div class="circ" style="left:310.5px;top:105.5px">3</div>
 <div class="circ" style="left:578.6px;top:55.7px">4</div>
 <div class="circ" style="left:609.1px;top:27.9px">5</div>
 <div class="circ" style="left:691.9px;top:85.3px">6</div>
</div>
</body></html>
